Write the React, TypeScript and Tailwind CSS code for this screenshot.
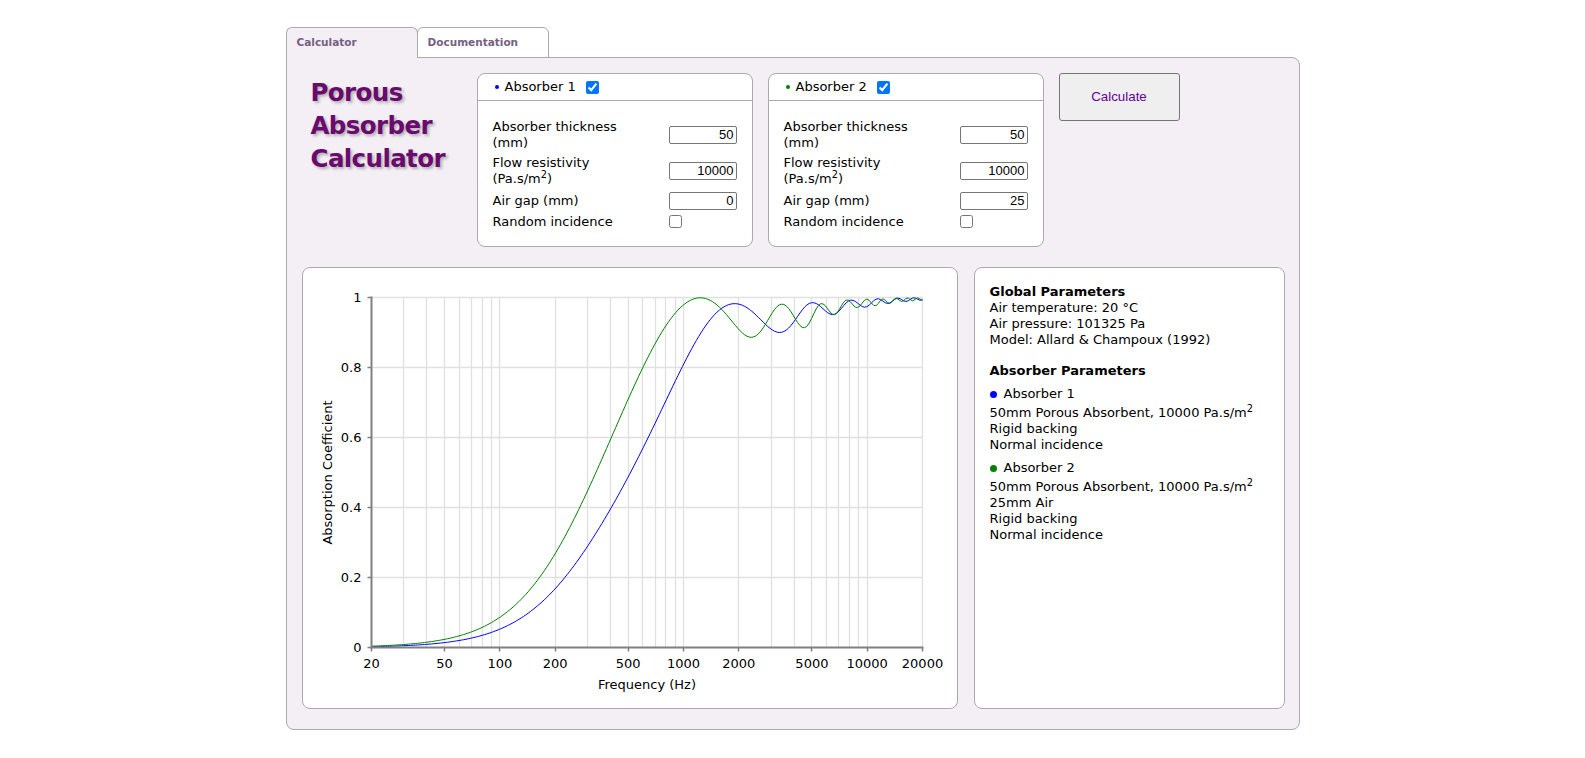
import React from 'react';

type C = [number, number];
const cadd = (a: C, b: C): C => [a[0] + b[0], a[1] + b[1]];
const cmul = (a: C, b: C): C => [a[0] * b[0] - a[1] * b[1], a[0] * b[1] + a[1] * b[0]];
const cdiv = (a: C, b: C): C => {
  const d = b[0] * b[0] + b[1] * b[1];
  return [(a[0] * b[0] + a[1] * b[1]) / d, (a[1] * b[0] - a[0] * b[1]) / d];
};
const csqrt = (z: C): C => {
  const r = Math.hypot(z[0], z[1]);
  const re = Math.sqrt(Math.max(0, (r + z[0]) / 2));
  let im = Math.sqrt(Math.max(0, (r - z[0]) / 2));
  if (z[1] < 0) im = -im;
  return [re, im];
};
const ctan = (z: C): C => {
  const a2 = 2 * z[0];
  const b2 = 2 * z[1];
  const d = Math.cos(a2) + Math.cosh(b2);
  return [Math.sin(a2) / d, Math.sinh(b2) / d];
};
const cscale = (z: C, s: number): C => [z[0] * s, z[1] * s];

function absorption(f: number, d: number, sigma: number, gap: number): number {
  const rho0 = 1.204;
  const c0 = 343.2;
  const Z0 = rho0 * c0;
  const w = 2 * Math.PI * f;
  const X = (1.2 * f) / sigma;
  const rho = cadd([1.2, 0], csqrt([-0.0364 / (X * X), -0.1144 / X]));
  const s = csqrt([2.82 / (X * X), 24.9 / X]);
  const K = cscale(cdiv(cadd([0, 29.64], s), cadd([0, 21.17], s)), 101320);
  const k = cscale(csqrt(cdiv(rho, K)), w);
  const Zc = csqrt(cmul(rho, K));
  const t = ctan(cscale(k, d));
  let Zs: C;
  if (gap <= 0) {
    Zs = cdiv(cmul([0, -1], Zc), t);
  } else {
    const k0 = w / c0;
    const ZL: C = [0, -Z0 / Math.tan(k0 * gap)];
    const jZcT = cmul([0, 1], cmul(Zc, t));
    const jZLT = cmul([0, 1], cmul(ZL, t));
    Zs = cmul(Zc, cdiv(cadd(ZL, jZcT), cadd(Zc, jZLT)));
  }
  const R = cdiv([Zs[0] - Z0, Zs[1]], [Zs[0] + Z0, Zs[1]]);
  return 1 - (R[0] * R[0] + R[1] * R[1]);
}

const X0 = 68.5;
const X1 = 619.5;
const YT = 29.5;
const YB = 379.5;
const xOf = (f: number) => X0 + (Math.log10(f / 20) / 3) * (X1 - X0);
const yOf = (v: number) => YB - v * (YB - YT);
const snap = (v: number) => Math.round(v - 0.5) + 0.5;

function curvePath(d: number, sigma: number, gap: number): string {
  const pts: string[] = [];
  const n = Math.floor(Math.log2(1000) * 24);
  for (let i = 0; i <= n + 1; i++) {
    const f = Math.min(20000, 20 * Math.pow(2, i / 24));
    const a = Math.max(0, Math.min(1, absorption(f, d, sigma, gap)));
    pts.push(`${xOf(f).toFixed(2)},${yOf(a).toFixed(2)}`);
  }
  return 'M' + pts.join('L');
}

function Chart() {
  const gridF: number[] = [];
  [10, 100, 1000, 10000].forEach((dec) => {
    for (let m = 1; m <= 9; m++) {
      const f = m * dec;
      if (f > 20 && f <= 20000) gridF.push(f);
    }
  });
  const xLabels = [20, 50, 100, 200, 500, 1000, 2000, 5000, 10000, 20000];
  const yLabels = [0, 0.2, 0.4, 0.6, 0.8, 1];
  const p1 = curvePath(0.05, 10000, 0);
  const p2 = curvePath(0.05, 10000, 0.025);
  return (
    <svg width="654" height="440" className="block font-['DejaVu_Sans',Verdana,sans-serif] text-[13px]">
      {gridF.map((f) => (
        <line key={'g' + f} x1={snap(xOf(f))} x2={snap(xOf(f))} y1={YT} y2={YB} stroke="#e0e0e0" strokeWidth="1.3" />
      ))}
      {yLabels.slice(1).map((v) => (
        <line key={'h' + v} x1={X0} x2={X1} y1={snap(yOf(v))} y2={snap(yOf(v))} stroke="#e0e0e0" strokeWidth="1.3" />
      ))}
      <path d={p1} fill="none" stroke="#0000ff" strokeWidth="1" />
      <path d={p2} fill="none" stroke="#008000" strokeWidth="1" />
      <line x1={X0} x2={X0} y1={YT - 1} y2={YB + 1} stroke="#808080" strokeWidth="2" />
      <line x1={X0 - 1} x2={X1 + 1} y1={YB} y2={YB} stroke="#808080" strokeWidth="2" />
      {yLabels.map((v) => (
        <g key={'yl' + v}>
          <line x1={X0 - 4} x2={X0} y1={snap(yOf(v))} y2={snap(yOf(v))} stroke="#808080" strokeWidth="1.5" />
          <text x={X0 - 10} y={yOf(v) + 4.5} textAnchor="end" fill="#000">
            {String(v)}
          </text>
        </g>
      ))}
      {xLabels.map((f) => (
        <g key={'xl' + f}>
          <line x1={snap(xOf(f))} x2={snap(xOf(f))} y1={YB} y2={YB + 4} stroke="#808080" strokeWidth="1.5" />
          <text x={xOf(f)} y={399.5} textAnchor="middle" fill="#000">
            {String(f)}
          </text>
        </g>
      ))}
      <text x={(X0 + X1) / 2} y={420.5} textAnchor="middle" fill="#000">
        Frequency (Hz)
      </text>
      <text x={29} y={204.5} textAnchor="middle" fill="#000" transform="rotate(-90 29 204.5)">
        Absorption Coefficient
      </text>
    </svg>
  );
}

function NumInput({ value }: { value: string }) {
  return (
    <input
      type="text"
      value={value}
      readOnly
      className="w-full h-[18px] border border-[#767676] rounded-[2px] bg-white text-right pr-[2px] font-['Liberation_Sans',Arial,sans-serif] text-[13px] text-black outline-none"
    />
  );
}

function AbsorberPanel({
  name,
  dot,
  thickness,
  flow,
  gap,
}: {
  name: string;
  dot: string;
  thickness: string;
  flow: string;
  gap: string;
}) {
  return (
    <div className="w-[276px] bg-white border border-[#aaaaaa] rounded-[8px]">
      <div className="h-[27px] border-b border-[#aaaaaa] flex items-center pl-[17px]">
        <span className={`inline-block w-[4px] h-[4px] rounded-full ${dot}`} />
        <span className="ml-[6px] leading-[16px]">{name}</span>
        <input type="checkbox" checked readOnly className="ml-[10px] m-0 w-[13px] h-[13px]" />
      </div>
      <div className="pt-[16px] px-[15px] pb-[15px]">
        <div className="flex items-center h-[36px]">
          <div className="flex-1 leading-[16.5px]">
            Absorber thickness
            <br />
            (mm)
          </div>
          <div className="w-[68px]">
            <NumInput value={thickness} />
          </div>
        </div>
        <div className="flex items-center h-[36px]">
          <div className="flex-1 leading-[16.5px]">
            Flow resistivity
            <br />
            (Pa.s/m<sup>2</sup>)
          </div>
          <div className="w-[68px]">
            <NumInput value={flow} />
          </div>
        </div>
        <div className="flex items-center h-[23px]">
          <div className="flex-1 leading-[16px]">Air gap (mm)</div>
          <div className="w-[68px]">
            <NumInput value={gap} />
          </div>
        </div>
        <div className="flex items-center h-[19px]">
          <div className="flex-1 leading-[16px]">Random incidence</div>
          <div className="w-[68px] flex items-center">
            <input type="checkbox" readOnly className="m-0 w-[13px] h-[13px]" />
          </div>
        </div>
      </div>
    </div>
  );
}

export default function App() {
  return (
    <div className="w-full min-h-[758px] bg-white font-['DejaVu_Sans',Verdana,sans-serif] text-[13px] text-black">
      <div className="w-[1014px] mx-auto pt-[27px]">
        <div className="flex h-[31px] relative z-10 -mb-px">
          <div className="w-[132px] h-[31px] border border-b-0 border-[#aaaaaa] rounded-t-[6px] bg-[#f3eff5] pl-[10px] font-bold text-[10.5px] leading-[28px] text-[#775f82]">
            Calculator
          </div>
          <div className="w-[132px] h-[31px] -ml-px border border-[#aaaaaa] rounded-t-[6px] bg-white pl-[10px] font-bold text-[10.5px] leading-[28px] text-[#775f82]">
            Documentation
          </div>
        </div>
        <div className="border border-[#aaaaaa] rounded-b-[8px] rounded-tr-[8px] bg-[#f3eff5] pt-[15px] pl-[15px] pr-[13px] pb-[20px]">
          <div className="flex items-start gap-[15px]">
            <div className="w-[160px] pl-[9px] pt-[3px] font-bold text-[24.5px] leading-[33px] tracking-[-0.6px] text-[#6a0a6e] [text-shadow:2px_2px_3px_#b0b0b0]">
              <div>Porous</div>
              <div>Absorber</div>
              <div>Calculator</div>
            </div>
            <AbsorberPanel name="Absorber 1" dot="bg-[#0000ff]" thickness="50" flow="10000" gap="0" />
            <AbsorberPanel name="Absorber 2" dot="bg-[#008000]" thickness="50" flow="10000" gap="25" />
            <button
              type="button"
              className="w-[121px] h-[48px] bg-[#efefef] border border-[#767676] rounded-[3px] text-[#660099] font-['Liberation_Sans',Arial,sans-serif] text-[13.33px]"
            >
              Calculate
            </button>
          </div>
          <div className="flex gap-[16px] mt-[20px]">
            <div className="w-[656px] h-[442px] bg-white border border-[#aaaaaa] rounded-[8px] overflow-hidden">
              <Chart />
            </div>
            <div className="w-[311px] h-[442px] bg-white border border-[#aaaaaa] rounded-[8px] pt-[16px] px-[15px] leading-[16px]">
              <div className="font-bold">Global Parameters</div>
              <div>Air temperature: 20 °C</div>
              <div>Air pressure: 101325 Pa</div>
              <div>Model: Allard &amp; Champoux (1992)</div>
              <div className="font-bold mt-[15px]">Absorber Parameters</div>
              <div className="mt-[7px] flex items-center">
                <span className="inline-block w-[7px] h-[7px] rounded-full bg-[#0000ff] mr-[7px]" />
                <span>Absorber 1</span>
              </div>
              <div className="pt-[3px]">
                50mm Porous Absorbent, 10000 Pa.s/m<sup>2</sup>
              </div>
              <div>Rigid backing</div>
              <div>Normal incidence</div>
              <div className="mt-[7px] flex items-center">
                <span className="inline-block w-[7px] h-[7px] rounded-full bg-[#008000] mr-[7px]" />
                <span>Absorber 2</span>
              </div>
              <div className="pt-[3px]">
                50mm Porous Absorbent, 10000 Pa.s/m<sup>2</sup>
              </div>
              <div>25mm Air</div>
              <div>Rigid backing</div>
              <div>Normal incidence</div>
            </div>
          </div>
        </div>
      </div>
    </div>
  );
}
